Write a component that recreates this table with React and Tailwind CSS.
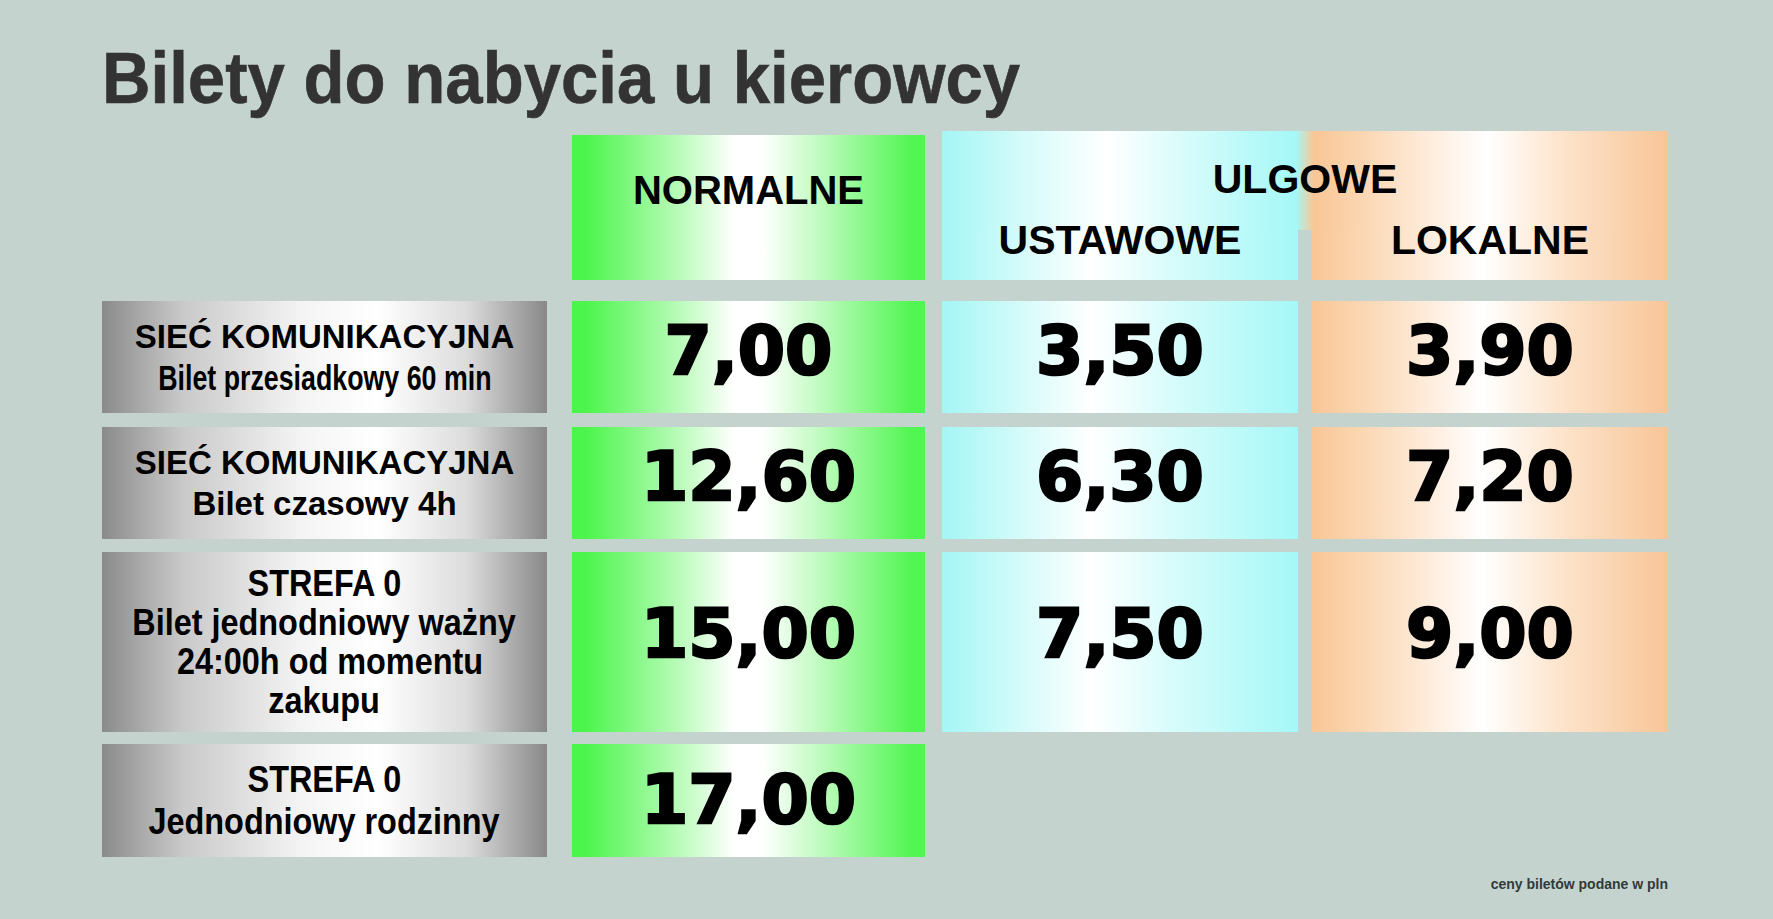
const green = "bg-[linear-gradient(90deg,#4cf54c_4%,#b8fbb8_30%,#ffffff_46%,#ffffff_54%,#b8fbb8_72%,#52f652_96%)]";
const cyan = "bg-[linear-gradient(90deg,#a4f6f5_0%,#d4fbfa_22%,#ffffff_42%,#d8fcfb_64%,#a4f8f7_100%)]";
const peach = "bg-[linear-gradient(90deg,#f9c695_0%,#fde2c8_24%,#ffffff_48%,#fde4cc_70%,#f8c597_100%)]";
const silver = "bg-[linear-gradient(90deg,#8a8a8a_0%,#c9c9c9_18%,#f4f4f4_45%,#ffffff_62%,#dcdcdc_82%,#888888_100%)]";

const rows = [
  {
    h: "h-[112px]",
    lead: "leading-[41px]",
    pb: "pb-[13px]",
    lines: [
      { t: "SIEĆ KOMUNIKACYJNA", cls: "text-[33px]" },
      { t: "Bilet przesiadkowy 60 min", cls: "text-[35px] scale-x-[0.765]" },
    ],
    prices: ["7,00", "3,50", "3,90"],
  },
  {
    h: "h-[112px]",
    lead: "leading-[41px]",
    pb: "pb-[13px]",
    lines: [
      { t: "SIEĆ KOMUNIKACYJNA", cls: "text-[33px]" },
      { t: "Bilet czasowy 4h", cls: "text-[33px]" },
    ],
    prices: ["12,60", "6,30", "7,20"],
  },
  {
    h: "h-[180px]",
    lead: "leading-[39px]",
    pb: "pb-[16px]",
    lines: [
      { t: "STREFA 0", cls: "text-[36px] scale-x-[0.9]" },
      { t: "Bilet jednodniowy ważny", cls: "text-[36px] scale-x-[0.9]" },
      { t: "24:00h od momentu", cls: "text-[36px] scale-x-[0.9] ml-[11px]" },
      { t: "zakupu", cls: "text-[36px] scale-x-[0.9]" },
    ],
    prices: ["15,00", "7,50", "9,00"],
  },
  {
    h: "h-[113px]",
    lead: "leading-[42px]",
    pb: "pb-[2px]",
    lines: [
      { t: "STREFA 0", cls: "text-[36px] scale-x-[0.9]" },
      { t: "Jednodniowy rodzinny", cls: "text-[36px] scale-x-[0.9]" },
    ],
    prices: ["17,00"],
  },
];

const Price = ({ value, bg, w, ml, pb }) => (
  <div className={`${w} ${ml} ${bg} ${pb} flex items-center justify-center`}>
    <span className="font-['DejaVu_Sans',sans-serif] font-bold text-[68px] leading-none text-black [-webkit-text-stroke:2.5px_#000]">
      {value}
    </span>
  </div>
);

export default function App() {
  return (
    <div className="w-[1773px] h-[919px] overflow-hidden bg-[#c5d3cf] pl-[102px] pt-[41px] font-['Liberation_Sans',Arial,sans-serif]">
      <h1 className="text-[73px] leading-none font-bold text-[#333333] scale-x-[0.92] origin-left whitespace-nowrap [-webkit-text-stroke:0.6px_#333333]">
        Bilety do nabycia u kierowcy
      </h1>

      <div className="w-[1566px] mt-[17px] flex flex-col">
        {/* header */}
        <div className="flex h-[149px]">
          <div className="w-[445px]" />
          <div className={`ml-[25px] mt-[4px] w-[353px] h-[145px] ${green} pt-[35px] text-center`}>
            <span className="text-[40px] leading-none font-bold text-black">NORMALNE</span>
          </div>
          <div className="ml-[17px] w-[726px] flex flex-col">
            <div className="h-[99px] bg-[linear-gradient(90deg,#a4f6f5_0px,#d4fbfa_80px,#ffffff_165px,#d8fcfb_240px,#a4f8f7_354px,#f9c695_372px,#fde2c8_455px,#ffffff_545px,#fde4cc_620px,#f8c597_726px)] pt-[28px] text-center">
              <span className="text-[41px] leading-none font-bold text-black">ULGOWE</span>
            </div>
            <div className="flex h-[50px]">
              <div className={`w-[356px] ${cyan} text-center`}>
                <div className="-mt-[10px] text-[41px] leading-none font-bold text-black">USTAWOWE</div>
              </div>
              <div className="w-[14px]" />
              <div className={`w-[356px] ${peach} text-center`}>
                <div className="-mt-[10px] text-[41px] leading-none font-bold text-black">LOKALNE</div>
              </div>
            </div>
          </div>
        </div>

        {rows.map((r, i) => (
          <div key={i} className={`flex ${r.h} ${i === 0 ? "mt-[21px]" : i === 1 ? "mt-[14px]" : i === 2 ? "mt-[13px]" : "mt-[12px]"}`}>
            <div className={`w-[445px] ${silver} flex flex-col items-center justify-center ${r.lead} font-bold text-black`}>
              {r.lines.map((l, j) => (
                <span key={j} className={`inline-block whitespace-nowrap ${l.cls}`}>
                  {l.t}
                </span>
              ))}
            </div>
            <Price value={r.prices[0]} bg={green} w="w-[353px]" ml="ml-[25px]" pb={r.pb} />
            {r.prices[1] && <Price value={r.prices[1]} bg={cyan} w="w-[356px]" ml="ml-[17px]" pb={r.pb} />}
            {r.prices[2] && <Price value={r.prices[2]} bg={peach} w="w-[356px]" ml="ml-[14px]" pb={r.pb} />}
          </div>
        ))}

        <div className="mt-[20px] text-right text-[14px] leading-none font-bold text-[#2f3b38]">
          ceny biletów podane w pln
        </div>
      </div>
    </div>
  );
}
